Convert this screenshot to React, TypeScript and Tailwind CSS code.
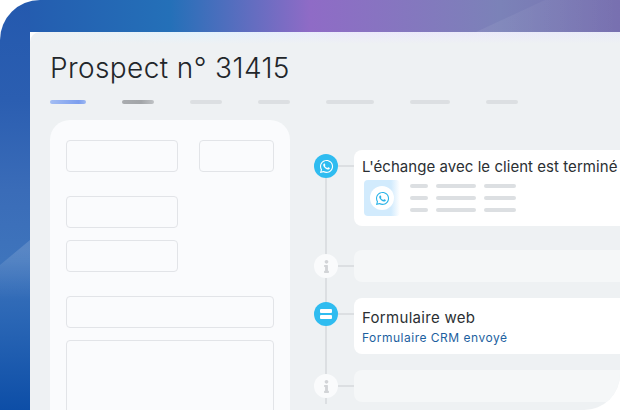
import React from 'react';
import { FaInfo, FaWhatsapp } from 'react-icons/fa';

const tabs = [
  { width: 'w-9', color: 'bg-[linear-gradient(90deg,#a3bdf3,#7c9eee_80%,#9db8f2)]' },
  { width: 'w-8', color: 'bg-[linear-gradient(90deg,#a9acaf,#a2a5a8_60%,#bfc2c5)]' },
  { width: 'w-8', color: 'bg-[#dcdfe2]' },
  { width: 'w-8', color: 'bg-[#dcdfe2]' },
  { width: 'w-12', color: 'bg-[#dcdfe2]' },
  { width: 'w-10', color: 'bg-[#dcdfe2]' },
  { width: 'w-8', color: 'bg-[#dcdfe2]' },
];

const Field: React.FC<{ className: string }> = ({ className }) => (
  <div className={`rounded-[4px] border border-[#e2e4e8] ${className}`} />
);

const Connector = () => <div className="mt-[15px] h-[2px] w-4 shrink-0 bg-[#dcdfe2]" />;

const InfoNode = () => (
  <div className="mt-1 flex h-6 w-6 shrink-0 items-center justify-center rounded-full bg-[#fafbfc] text-[#d2d4d7]">
    <FaInfo size={13} />
  </div>
);

const EmptyEvent = () => (
  <div className="flex items-start">
    <InfoNode />
    <Connector />
    <div className="h-8 flex-1 rounded-l-[8px] bg-[#f5f7f8]" />
  </div>
);

const lineRows = [0, 1, 2];

export default function App() {
  return (
    <div className="h-[410px] w-[620px] bg-white font-['Inter',sans-serif]">
      <div className="relative h-full w-full overflow-hidden rounded-tl-[40px] rounded-br-[36px] bg-[linear-gradient(180deg,#2459ae_0,#2b5eb1_100px,#3a6cb8_190px,#3e74bc_260px,#2a66b5_320px,#0d4ea7_410px),linear-gradient(90deg,#2459ae_0,#2470b8_170px,#8f6bc6_310px,#7b82b8_500px,#7870b0_620px)] bg-[length:30px_100%,100%_32px] bg-no-repeat pl-[30px] pt-8">
        <svg className="absolute left-0 top-0 h-[410px] w-[620px]" viewBox="0 0 620 410" fill="none">
          <defs>
            <linearGradient id="sweep" x1="15" y1="250" x2="15" y2="300" gradientUnits="userSpaceOnUse">
              <stop offset="0" stopColor="#ffffff" stopOpacity="0.14" />
              <stop offset="1" stopColor="#ffffff" stopOpacity="0" />
            </linearGradient>
            <linearGradient id="sweepTop" x1="476" y1="0" x2="620" y2="0" gradientUnits="userSpaceOnUse">
              <stop offset="0" stopColor="#ffffff" stopOpacity="0.07" />
              <stop offset="1" stopColor="#ffffff" stopOpacity="0" />
            </linearGradient>
          </defs>
          <path d="M0 265 L30 240 L30 300 L0 320 Z" fill="url(#sweep)" />
          <path d="M476 32 L545 0 L620 0 L620 32 Z" fill="url(#sweepTop)" />
        </svg>
        <div className="relative h-full overflow-hidden rounded-tl-[10px] bg-[linear-gradient(180deg,transparent_0,#eef1f3_12px),linear-gradient(90deg,#eef1f3_0,#e2f2fd_170px,#ebe8fb_330px,#e9ebf8_620px)]">
          <h1 className="pl-5 pt-[19px] text-[28px] font-light leading-[34px] tracking-[0.4px] text-[#22262a]">
            Prospect n° 31415
          </h1>
          <div className="mt-[15px] flex gap-9 pl-5">
            {tabs.map((tab, i) => (
              <div key={i} className={`h-1 rounded-full ${tab.width} ${tab.color}`} />
            ))}
          </div>
          <div className="mt-4 flex">
            <div className="ml-5 h-[300px] w-60 shrink-0 rounded-t-[20px] bg-[#fafbfd] px-4 pt-5">
              <div className="flex gap-[21px]">
                <Field className="h-8 w-28" />
                <Field className="h-8 w-[75px]" />
              </div>
              <Field className="mt-6 h-8 w-28" />
              <Field className="mt-3 h-8 w-28" />
              <Field className="mt-6 h-8 w-full" />
              <Field className="mt-3 h-[100px] w-full" />
            </div>
            <div className="relative ml-6 mt-[30px] flex-1">
              <div className="absolute bottom-[16px] left-[11px] top-[16px] w-[2px] bg-[#dcdfe2]" />
              <div className="relative flex flex-col">
                <div className="flex items-start">
                  <div className="mt-1 flex h-6 w-6 shrink-0 items-center justify-center rounded-full bg-[#2fbcf0] text-white">
                    <FaWhatsapp size={15} />
                  </div>
                  <Connector />
                  <div className="h-[76px] flex-1 rounded-l-[8px] bg-white pl-2 pt-[7px]">
                    <p className="whitespace-nowrap text-[15px] leading-5 tracking-[0.05px] text-[#2b2f33]">
                      L'échange avec le client est terminé
                    </p>
                    <div className="ml-[2px] mt-[3px] flex">
                      <div className="flex h-9 w-9 items-center justify-center rounded-[4px] bg-[linear-gradient(90deg,#d2ebfd_0,#d2ebfd_75%,#ffffff_100%)]">
                        <div className="flex h-6 w-6 items-center justify-center rounded-full bg-white text-[#2cb4e8]">
                          <FaWhatsapp size={15} />
                        </div>
                      </div>
                      <div className="ml-[10px] mt-1 flex flex-col gap-2">
                        {lineRows.map((row) => (
                          <div key={row} className="flex gap-2">
                            <div className="h-1 w-[18px] rounded-full bg-[#dcdfe2]" />
                            <div className="h-1 w-10 rounded-full bg-[#dcdfe2]" />
                            <div className="h-1 w-8 rounded-full bg-[#dcdfe2]" />
                          </div>
                        ))}
                      </div>
                    </div>
                  </div>
                </div>
                <div className="mt-6">
                  <EmptyEvent />
                </div>
                <div className="mt-4 flex items-start">
                  <div className="mt-1 flex h-6 w-6 shrink-0 flex-col items-center justify-center gap-[2px] rounded-full bg-[#2fbcf0]">
                    <div className="h-1 w-3 rounded-[1px] bg-white" />
                    <div className="h-1 w-3 rounded-[1px] bg-white" />
                  </div>
                  <Connector />
                  <div className="h-14 flex-1 rounded-l-[8px] bg-white pl-2 pt-[10px]">
                    <p className="text-[15px] leading-5 tracking-[0.3px] text-[#2b2f33]">Formulaire web</p>
                    <p className="mt-[2px] text-[12px] leading-4 tracking-[0.5px] text-[#1d5fa0]">Formulaire CRM envoyé</p>
                  </div>
                </div>
                <div className="mt-4">
                  <EmptyEvent />
                </div>
              </div>
            </div>
          </div>
        </div>
      </div>
    </div>
  );
}
